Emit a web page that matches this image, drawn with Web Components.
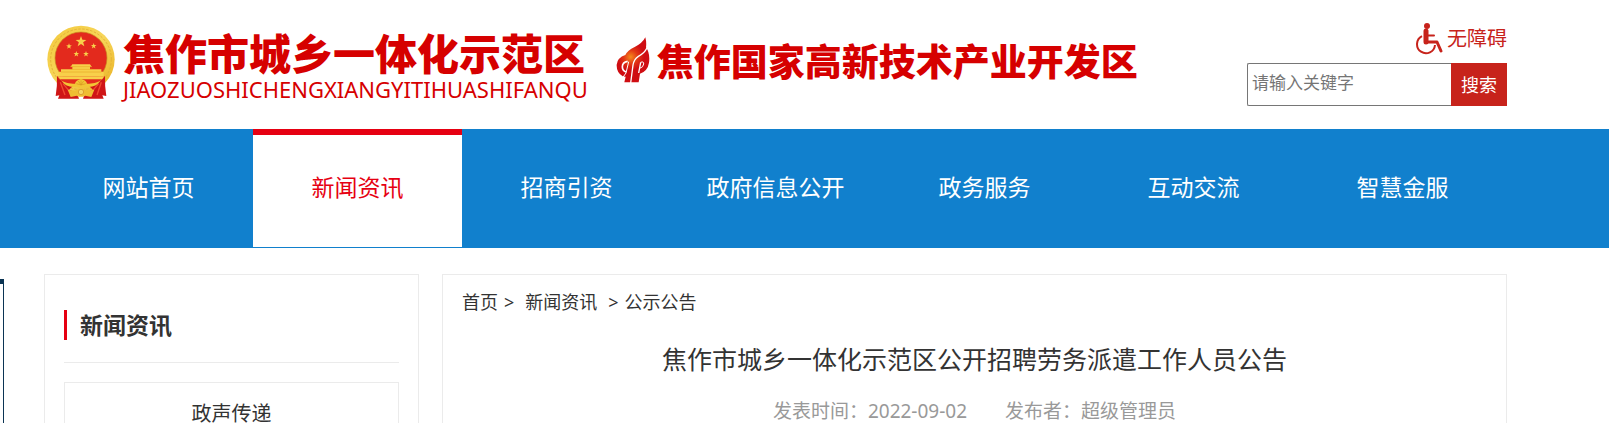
<!DOCTYPE html>
<html lang="zh-CN">
<head>
<meta charset="utf-8">
<meta name="viewport" content="width=device-width, initial-scale=1">
<title>焦作市城乡一体化示范区</title>
<style>
  body {
    margin: 0;
    background: #fff;
    color: #333;
    font-family: "Noto Sans", "Noto Sans CJK SC", sans-serif;
    font-size: 18px;
    --page-left: 44px;
    --page-right: 102px;
    --line: #ebebeb;
    --red: #e60012;
    --brick: #c7231b;
    --blue: #1180cd;
    overflow-x: hidden;
  }

  main {
    display: flex;
    gap: 23px;
    padding: 26px var(--page-right) 0 var(--page-left);
  }
</style>
</head>
<body>
<site-header>
  <site-logo slot="logo" pinyin="JIAOZUOSHICHENGXIANGYITIHUASHIFANQU">焦作市城乡一体化示范区</site-logo>
  <zone-logo slot="logo">焦作国家高新技术产业开发区</zone-logo>
  <access-link slot="tools">无障碍</access-link>
  <site-search slot="tools"></site-search>
</site-header>

<site-nav>
  <nav-item>网站首页</nav-item>
  <nav-item active>新闻资讯</nav-item>
  <nav-item>招商引资</nav-item>
  <nav-item>政府信息公开</nav-item>
  <nav-item>政务服务</nav-item>
  <nav-item>互动交流</nav-item>
  <nav-item>智慧金服</nav-item>
</site-nav>

<main>
  <side-panel>
    <span slot="title">新闻资讯</span>
    <side-link>政声传递</side-link>
  </side-panel>
  <article-panel>
    <bread-crumb slot="path"></bread-crumb>
    <span slot="title">焦作市城乡一体化示范区公开招聘劳务派遣工作人员公告</span>
    <span slot="meta">发表时间：2022-09-02</span>
    <span slot="meta">发布者：超级管理员</span>
  </article-panel>
</main>

<float-box></float-box>

<script>
class BaseElement extends HTMLElement {
  constructor() {
    super();

    this.shadowObj = this.attachShadow({ mode: "open" });
    this.render();
  }

  render() {
    this.shadowObj.innerHTML = this.getStyles() + this.getTemplate();
  }
}

class SiteHeader extends BaseElement {
  getStyles() {
    return `
      <style>
      :host {
        display: block;
      }
      header {
        display: flex;
        justify-content: space-between;
        align-items: flex-start;
        min-height: 106px;
        padding: 23px var(--page-right) 0 var(--page-left);
      }
      .logos {
        display: flex;
        gap: 28px;
      }
      .tools {
        display: flex;
        flex-direction: column;
        align-items: flex-end;
        gap: 8px;
      }
      </style>
    `;
  }

  getTemplate() {
    return `
      <header>
        <div class="logos"><slot name="logo"></slot></div>
        <div class="tools"><slot name="tools"></slot></div>
      </header>
    `;
  }
}

class SiteLogo extends BaseElement {
  connectedCallback() {
    this.shadowObj.querySelector(".pinyin").textContent = this.getAttribute("pinyin");
  }

  getStyles() {
    return `
      <style>
      :host {
        display: flex;
        gap: 8px;
        padding-left: 3px;
        color: #d60000;
        white-space: nowrap;
      }
      svg {
        width: 68px;
        height: 74px;
        margin-top: 2px;
      }
      .words {
        display: flex;
        flex-direction: column;
        gap: 4px;
        padding-top: 8px;
      }
      .name {
        font-family: "Noto Sans CJK SC", sans-serif;
        font-size: 42px;
        font-weight: 900;
        line-height: 42px;
      }
      .pinyin {
        font-size: 22px;
        line-height: 24px;
      }
      </style>
    `;
  }

  getTemplate() {
    return `
      <svg viewBox="22 14 204 222" aria-hidden="true">
        <defs>
          <linearGradient id="gold" x1="0" y1="0" x2="1" y2="1">
            <stop offset="0" stop-color="#f3c93c"/>
            <stop offset=".5" stop-color="#f7d65a"/>
            <stop offset="1" stop-color="#e8ae1e"/>
          </linearGradient>
          <path id="star" d="M0-10 2.4-3.2 9.5-3.1 3.8 1.2 5.9 8.1 0 4 -5.9 8.1 -3.8 1.2 -9.5-3.1 -2.4-3.2Z"/>
        </defs>
        <circle cx="124" cy="117" r="101" fill="url(#gold)"/>
        <circle cx="124" cy="117" r="91" fill="none" stroke="#e3b136" stroke-width="3" stroke-dasharray="7 5"/>
        <circle cx="124" cy="113" r="78" fill="#e32a1d" stroke="#c98a20" stroke-width="2"/>
        <g fill="#f8d04a">
          <use href="#star" transform="translate(124 64) scale(1.7)"/>
          <use href="#star" transform="translate(88 78) scale(.9)"/>
          <use href="#star" transform="translate(162 77) scale(.9)"/>
          <use href="#star" transform="translate(110 101) scale(.9)"/>
          <use href="#star" transform="translate(139 101) scale(.9)"/>
          <path d="M98 132h53l5 7h-5v8h34v7h7v14H57v-14h7v-7h34v-8h-5Z"/>
        </g>
        <path d="M92 147h66M64 155h121M92 139h65" stroke="#e9a927" stroke-width="2"/>
        <path d="M54 168h140q-12 18-30 24h-80q-20-7-30-24Z" fill="#e32a1d"/>
        <path d="M54 168h140l-6 9H61Z" fill="#f8d04a"/>
        <path d="M52 166q11 21 48 31l-12 11q25 7 30 27H55l4-10-11 2q5-28 4-61Z" fill="#cf1516"/>
        <path d="M196 166q-11 21-48 31l12 11q-25 7-30 27h62l-4-10 12 2q-5-28-4-61Z" fill="#cf1516"/>
        <path d="M62 186l14 38M70 190l25 29M185 186l-13 38M177 190l-25 29" stroke="#f04a31" stroke-width="4"/>
        <path d="M66 182q22 10 40 8 2-11 18-14 16 3 18 14 18 2 40-8-16 22-45 17-13 6-26 0-29 5-45-17Z" fill="#f2c536"/>
        <path d="M124 194l-14-4M124 194l-8-12M124 194l8-12M124 194l14-4M124 194v-14" stroke="#d79520" stroke-width="2"/>
        <path d="M84 208l22 3q18-11 36 0l22-3-9 22-18-4q-13 7-26 0l-18 4Z" fill="#efbd32"/>
        <circle cx="124" cy="215" r="8" fill="#f7d763" stroke="#d18b20" stroke-width="2"/>
      </svg>
      <div class="words">
        <span class="name"><slot></slot></span>
        <span class="pinyin"></span>
      </div>
    `;
  }
}

class ZoneLogo extends BaseElement {
  getStyles() {
    return `
      <style>
      :host {
        display: flex;
        gap: 7px;
        padding-top: 14px;
        color: #d60000;
        font-family: "Noto Sans CJK SC", sans-serif;
        font-size: 37px;
        font-weight: 900;
        line-height: 46px;
        white-space: nowrap;
      }
      svg {
        width: 34px;
        height: 46px;
      }
      </style>
    `;
  }

  getTemplate() {
    return `
      <svg viewBox="24 20 102 138" aria-hidden="true">
        <defs>
          <radialGradient id="fire" gradientUnits="userSpaceOnUse" cx="68" cy="80" r="40">
            <stop offset="0" stop-color="#f58a1c"/>
            <stop offset=".5" stop-color="#e33a15"/>
            <stop offset="1" stop-color="#cf0d12"/>
          </radialGradient>
        </defs>
        <path fill="url(#fire)" d="M112 21Q103 39 80 50 58 61 52 74 28 82 26 103 25 126 44 138L53 139 49 156H92L96 130Q119 122 123 97 127 70 114 51 116 36 112 21Z"/>
        <g fill="none" stroke="#fff">
          <path d="M59 93Q43 96 43 109 43 120 54 125" stroke-width="5"/>
          <path d="M62 94 54 128 44 142" stroke-width="3"/>
          <path d="M117 52Q110 68 91 78 78 86 75 104L68 158" stroke-width="4"/>
          <path d="M98 96 92 128" stroke-width="4"/>
          <path d="M98 96Q108 92 107 101 106 111 95 114" stroke-width="3"/>
        </g>
      </svg>
      <slot></slot>
    `;
  }
}

class AccessLink extends BaseElement {
  getStyles() {
    return `
      <style>
      :host {
        display: block;
      }
      a {
        display: flex;
        align-items: center;
        gap: 4px;
        color: var(--brick);
        font-size: 20px;
        line-height: 32px;
        text-decoration: none;
      }
      svg {
        width: 27px;
        height: 32px;
      }
      </style>
    `;
  }

  getTemplate() {
    return `
      <a href="#">
        <svg viewBox="0 0 27 32" fill="none" stroke="#c7231b" aria-hidden="true">
          <circle cx="11" cy="3" r="3" fill="#c7231b" stroke="none"/>
          <path d="M10 9V19H21L25 28" stroke-width="3" stroke-linecap="round" stroke-linejoin="round"/>
          <path d="M10 8V19" stroke-width="5" stroke-linecap="round"/>
          <path d="M10 12.500H18" stroke-width="2" stroke-linecap="round"/>
          <path d="M6 13.200A9 9 0 1 0 19 22" stroke-width="2"/>
        </svg>
        <slot></slot>
      </a>
    `;
  }
}

class SiteSearch extends BaseElement {
  getStyles() {
    return `
      <style>
      :host {
        display: block;
      }
      form {
        display: flex;
        height: 43px;
      }
      input {
        box-sizing: border-box;
        width: 204px;
        padding: 0 4px 4px;
        border: 1px solid #767676;
        border-right: 0;
        border-radius: 2px 0 0 2px;
        font: inherit;
        font-size: 17px;
        outline: 0;
      }
      input::placeholder {
        color: #757575;
      }
      button {
        width: 56px;
        padding: 0 0 2px;
        border: 0;
        background: var(--brick);
        color: #fff;
        font: inherit;
        font-size: 18px;
      }
      </style>
    `;
  }

  getTemplate() {
    return `
      <form role="search">
        <input type="text" placeholder="请输入关键字" aria-label="请输入关键字">
        <button type="button">搜索</button>
      </form>
    `;
  }
}

class SiteNav extends BaseElement {
  getStyles() {
    return `
      <style>
      :host {
        display: block;
        background: var(--blue);
      }
      nav {
        display: flex;
        padding: 0 var(--page-right) 1px var(--page-left);
      }
      </style>
    `;
  }

  getTemplate() {
    return `<nav><slot></slot></nav>`;
  }
}

class NavItem extends BaseElement {
  getStyles() {
    return `
      <style>
      :host {
        flex: 1 1 0;
      }
      a {
        display: block;
        padding: 6px 0 8px;
        color: #fff;
        font-size: 23px;
        line-height: 104px;
        text-align: center;
        text-decoration: none;
        white-space: nowrap;
      }
      :host([active]) a {
        padding-top: 0;
        border-top: 6px solid var(--red);
        background: #fff;
        color: var(--red);
      }
      </style>
    `;
  }

  getTemplate() {
    return `<a href="#"><slot></slot></a>`;
  }
}

class SidePanel extends BaseElement {
  getStyles() {
    return `
      <style>
      :host {
        flex: 0 0 auto;
        box-sizing: border-box;
        width: 375px;
        padding: 19px;
        border: 1px solid var(--line);
      }
      .head {
        padding: 16px 0 22px;
        border-bottom: 1px solid var(--line);
      }
      h2 {
        margin: 0;
        padding-left: 13px;
        border-left: 3px solid var(--red);
        font-size: 23px;
        line-height: 30px;
      }
      ul {
        margin: 19px 0 0;
        padding: 0;
        border: 1px solid var(--line);
        list-style: none;
      }
      </style>
    `;
  }

  getTemplate() {
    return `
      <div class="head"><h2><slot name="title"></slot></h2></div>
      <ul><slot></slot></ul>
    `;
  }
}

class SideLink extends BaseElement {
  getStyles() {
    return `
      <style>
      :host {
        display: block;
      }
      li {
        display: block;
      }
      a {
        display: block;
        color: #333;
        font-size: 20px;
        line-height: 62px;
        text-align: center;
        text-decoration: none;
      }
      </style>
    `;
  }

  getTemplate() {
    return `<li><a href="#"><slot></slot></a></li>`;
  }
}

class ArticlePanel extends BaseElement {
  getStyles() {
    return `
      <style>
      :host {
        flex: 1;
        min-width: 0;
        padding: 12px 19px;
        border: 1px solid var(--line);
      }
      h1 {
        margin: 24px 0 0;
        font-size: 25px;
        font-weight: 400;
        line-height: 36px;
        text-align: center;
      }
      .meta {
        display: flex;
        justify-content: center;
        gap: 38px;
        margin-top: 20px;
        color: #999;
        font-size: 19px;
        line-height: 28px;
      }
      </style>
    `;
  }

  getTemplate() {
    return `
      <slot name="path"></slot>
      <h1><slot name="title"></slot></h1>
      <div class="meta"><slot name="meta"></slot></div>
    `;
  }
}

class BreadCrumb extends BaseElement {
  getStyles() {
    return `
      <style>
      :host {
        display: block;
      }
      nav {
        display: flex;
        gap: 6px;
        font-size: 18px;
        line-height: 30px;
      }
      a {
        color: #333;
        text-decoration: none;
      }
      .section {
        padding: 0 5px;
      }
      </style>
    `;
  }

  getTemplate() {
    return `
      <nav>
        <a href="#">首页</a>
        <span>&gt;</span>
        <a class="section" href="#">新闻资讯</a>
        <span>&gt;</span>
        <a href="#">公示公告</a>
      </nav>
    `;
  }
}

// panel parked past the left edge, only its right border shows
class FloatBox extends BaseElement {
  getStyles() {
    return `
      <style>
      :host {
        position: fixed;
        top: 279px;
        bottom: 0;
        left: -116px;
        box-sizing: border-box;
        width: 120px;
        border: 1px solid #0b3453;
        border-top-width: 5px;
        border-bottom: 0;
      }
      </style>
    `;
  }

  getTemplate() {
    return ``;
  }
}

customElements.define("site-header", SiteHeader);
customElements.define("site-logo", SiteLogo);
customElements.define("zone-logo", ZoneLogo);
customElements.define("access-link", AccessLink);
customElements.define("site-search", SiteSearch);
customElements.define("site-nav", SiteNav);
customElements.define("nav-item", NavItem);
customElements.define("side-panel", SidePanel);
customElements.define("side-link", SideLink);
customElements.define("article-panel", ArticlePanel);
customElements.define("bread-crumb", BreadCrumb);
customElements.define("float-box", FloatBox);
</script>
</body>
</html>
